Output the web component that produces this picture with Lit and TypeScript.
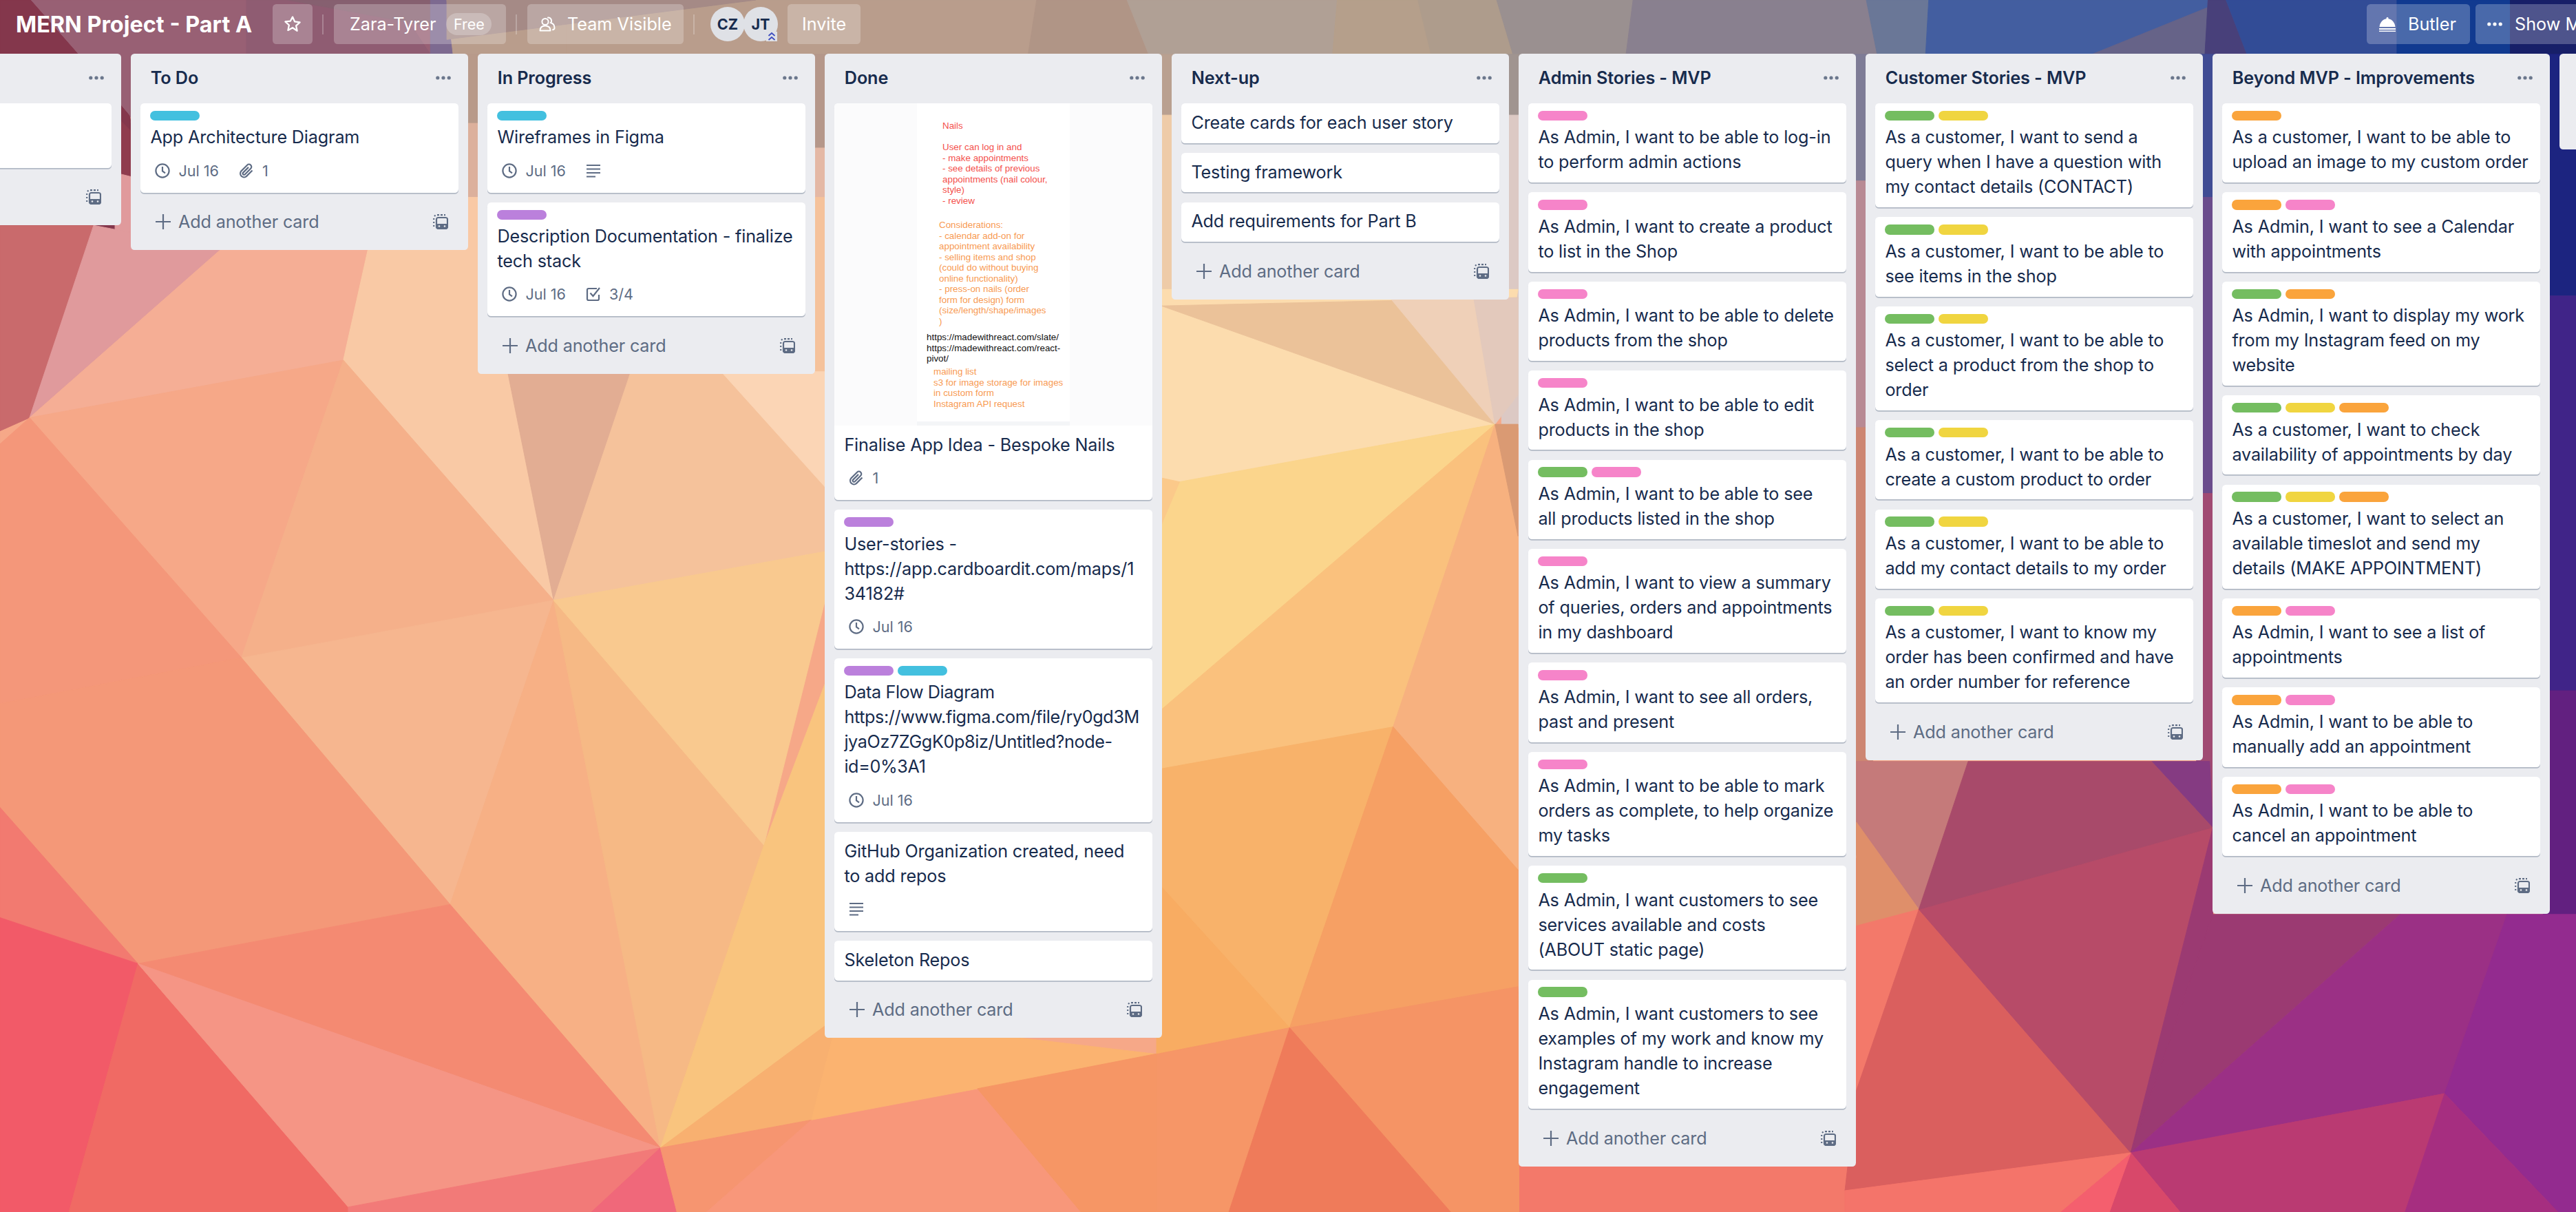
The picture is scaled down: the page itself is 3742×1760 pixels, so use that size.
import { LitElement, html, css, svg } from "lit";
import { customElement } from "lit/decorators.js";

type Badge = { kind: "clock" | "clip" | "desc" | "check"; text?: string };
type Card = { text: string; labels?: string[]; badges?: Badge[]; cover?: boolean; tight?: boolean };
type List = { title: string; cards: Card[] };

const pink = "pink";
const green = "green";
const yellow = "yellow";
const orange = "orange";
const blue = "blue";
const purple = "purple";
const jul16: Badge = { kind: "clock", text: "Jul 16" };

const LISTS: List[] = [
  { title: "To Do", cards: [{ text: "App Architecture Diagram", labels: [blue], badges: [jul16, { kind: "clip", text: "1" }] }] },
  {
    title: "In Progress",
    cards: [
      { text: "Wireframes in Figma", labels: [blue], badges: [jul16, { kind: "desc" }] },
      { text: "Description Documentation - finalize tech stack", labels: [purple], badges: [jul16, { kind: "check", text: "3/4" }] },
    ],
  },
  {
    title: "Done",
    cards: [
      { text: "Finalise App Idea - Bespoke Nails", cover: true, badges: [{ kind: "clip", text: "1" }] },
      { text: "User-stories - https://app.cardboardit.com/maps/134182#", labels: [purple], badges: [jul16] },
      { text: "Data Flow Diagram https://www.figma.com/file/ry0gd3MjyaOz7ZGgK0p8iz/Untitled?node-id=0%3A1", labels: [purple, blue], badges: [jul16], tight: true },
      { text: "GitHub Organization created, need to add repos", badges: [{ kind: "desc" }] },
      { text: "Skeleton Repos" },
    ],
  },
  {
    title: "Next-up",
    cards: [{ text: "Create cards for each user story" }, { text: "Testing framework" }, { text: "Add requirements for Part B" }],
  },
  {
    title: "Admin Stories - MVP",
    cards: [
      { text: "As Admin, I want to be able to log-in to perform admin actions", labels: [pink] },
      { text: "As Admin, I want to create a product to list in the Shop", labels: [pink] },
      { text: "As Admin, I want to be able to delete products from the shop", labels: [pink] },
      { text: "As Admin, I want to be able to edit products in the shop", labels: [pink] },
      { text: "As Admin, I want to be able to see all\u00a0products listed in the shop", labels: [green, pink] },
      { text: "As Admin, I want to view a summary of queries, orders and appointments in my dashboard", labels: [pink] },
      { text: "As Admin, I want to see all orders, past and present", labels: [pink] },
      { text: "As Admin, I want to be able to mark orders as complete, to help organize my tasks", labels: [pink] },
      { text: "As Admin, I want customers to see services available and costs (ABOUT static page)", labels: [green] },
      { text: "As Admin, I want customers to see examples of my work and know my Instagram handle to increase engagement", labels: [green] },
    ],
  },
  {
    title: "Customer Stories - MVP",
    cards: [
      { text: "As a customer, I want to send a query when I have a question with my contact details (CONTACT)", labels: [green, yellow] },
      { text: "As a customer, I want to be able to see items in the shop", labels: [green, yellow] },
      { text: "As a customer, I want to be able to select a product from the shop to order", labels: [green, yellow] },
      { text: "As a customer, I want to be able to create a custom product to order", labels: [green, yellow] },
      { text: "As a customer, I want to be able to add my contact details to my order", labels: [green, yellow] },
      { text: "As a customer, I want to know my order has been confirmed and have an order number for reference", labels: [green, yellow] },
    ],
  },
  {
    title: "Beyond MVP - Improvements",
    cards: [
      { text: "As a customer, I want to be able to upload an image to my custom order", labels: [orange] },
      { text: "As Admin, I want to see a Calendar with appointments", labels: [orange, pink] },
      { text: "As Admin, I want to display my work from my Instagram feed on my website", labels: [green, orange] },
      { text: "As a customer, I want to check availability of appointments by day", labels: [green, yellow, orange] },
      { text: "As a customer, I want to select an available timeslot and send my details (MAKE APPOINTMENT)", labels: [green, yellow, orange] },
      { text: "As Admin, I want to see a list of appointments", labels: [orange, pink] },
      { text: "As Admin, I want to be able to manually add an appointment", labels: [orange, pink] },
      { text: "As Admin, I want to be able to cancel an appointment", labels: [orange, pink] },
    ],
  },
];

// background facets, in the coordinates of the 1568x737 preview
const FACETS: [string, string][] = [
  ["0,0 1568,0 1568,737 0,737", "#f6a888"],
  // header band
  ["0,0 19,0 48,33 79,70 90,160 0,160", "#84374c"],
  ["19,0 175,0 270,0 270,60 100,110 79,70 48,33", "#986074"],
  ["150,0 240,0 262,33 262,60 150,60", "#8f5c72"],
  ["175,0 262,0 262,16", "#866070"],
  ["262,0 272,0 285,33 262,60", "#7d6a90"],
  ["272,0 345,0 345,70 280,70", "#b99d8c"],
  ["345,0 631,0 620,70 345,70", "#b99d8c"],
  ["272,0 460,0 272,24", "#a58a86"],
  ["631,0 686,0 714,70 620,70", "#b09586"],
  ["686,0 814,0 808,70 714,70", "#b0a095"],
  ["814,0 863,0 880,70 808,70", "#b59f8b"],
  ["863,0 911,0 932,70 880,70", "#ae9c8c"],
  ["911,0 994,0 985,70 932,70", "#9a9090"],
  ["994,0 1136,0 1150,70 985,70", "#89808f"],
  ["1136,0 1174,0 1170,70 1150,70", "#6a7797"],
  ["1174,0 1355,0 1350,70 1170,70", "#435ea0"],
  ["1355,0 1350,70 1182,70", "#666388"],
  ["1344,0 1355,0 1382,70 1340,70", "#48407a"],
  ["1355,0 1459,0 1459,70 1382,70", "#324c96"],
  ["1459,0 1528,0 1528,70 1459,70", "#113a90"],
  ["1528,0 1568,0 1568,70 1528,70", "#171f68"],
  // narrow gaps under the header
  ["79,33 90,33 90,90 79,70", "#986074"],
  ["70,70 90,90 90,110 70,105", "#8f3c4e"],
  ["70,105 90,110 90,150 70,150", "#e09a9c"],
  ["280,33 300,33 300,75 280,75", "#b89a8a"],
  ["280,75 300,75 300,140 280,140", "#dcb09c"],
  ["280,140 300,140 300,240 280,240", "#f5c6a8"],
  ["490,33 510,33 510,90 490,90", "#b5978a"],
  ["490,90 510,90 510,140 490,140", "#e4b8a5"],
  ["490,140 510,140 510,340 490,340", "#f9cfae"],
  ["702,33 715,33 715,70 702,70", "#b9a090"],
  ["702,70 715,70 715,186 702,186", "#eecba8"],
  ["914,33 928,33 928,70 914,70", "#a09490"],
  ["914,70 928,70 928,260 914,260", "#dcc9c4"],
  ["1126,33 1140,33 1140,110 1126,110", "#7e7c96"],
  ["1126,110 1140,110 1140,260 1126,260", "#b88a94"],
  ["1126,260 1140,260 1140,520 1126,520", "#cd8672"],
  ["1337,33 1350,33 1350,120 1337,120", "#404c94"],
  ["1337,120 1350,120 1350,300 1337,300", "#6a4c8c"],
  ["1337,300 1350,300 1350,520 1337,520", "#a04a72"],
  ["1548,33 1568,33 1568,180 1548,180", "#1c2480"],
  ["1548,180 1568,180 1568,420 1548,420", "#402488"],
  ["1548,420 1568,420 1568,560 1548,560", "#622080"],
  // lower left
  ["0,137 57,137 18,254 0,262", "#c96a6c"],
  ["57,137 134,152 18,254", "#e09a9c"],
  ["80,137 231,137 231,152 134,152", "#f3ad95"],
  ["134,152 231,152 209,219 18,254", "#f5ae95"],
  ["231,120 300,120 309,226 337,365 209,219", "#f9c9a5"],
  ["309,226 384,226 337,365", "#e2ad93"],
  ["384,226 300,120 520,120 520,334 337,365", "#f5c29b"],
  ["439,226 520,226 520,310 503,297", "#fbd5b5"],
  ["18,254 209,219 147,400", "#f6a888"],
  ["209,219 337,365 147,400", "#f5b08a"],
  ["147,400 337,365 274,550", "#f6b68f"],
  ["337,365 274,550 402,698", "#f7b085"],
  ["337,365 465,514 402,698", "#f6b985"],
  ["337,365 510,334 465,514", "#f9c98f"],
  ["465,514 510,395 510,618 402,698", "#f9c47e"],
  ["0,270 18,254 147,400 0,428", "#f4977a"],
  ["0,428 147,400 274,550 84,586 0,491", "#f49878"],
  ["0,491 84,586 0,558", "#f27a70"],
  ["0,558 84,586 42,737 0,737", "#f25a68"],
  ["84,586 212,734 212,737 42,737", "#f06a64"],
  ["84,586 274,550 402,698", "#f48a72"],
  ["84,586 402,698 212,734", "#f59585"],
  ["212,734 402,698 470,737 212,737", "#f27a78"],
  ["360,737 402,698 412,737", "#f0687a"],
  ["402,698 510,618 494,681", "#f8b070"],
  ["402,698 494,681 430,737 412,737", "#f69570"],
  ["494,681 595,662 658,737 430,737", "#f8977a"],
  ["494,681 510,618 704,641 595,662", "#fbb370"],
  ["595,662 785,625 748,737 658,737", "#f69665"],
  // gap under Next-up
  ["704,176 924,176 910,258 718,293 704,290", "#fcdcae"],
  ["707,186 924,181 910,258", "#ebc299"],
  ["846,181 897,181 910,258", "#efd0b8"],
  ["897,181 924,181 924,240 910,258", "#e3c9bc"],
  ["718,293 910,258 707,434 704,320", "#fbd58c"],
  ["704,290 718,293 704,326", "#fbc98a"],
  ["704,434 910,258 848,442 704,468", "#fac17d"],
  ["910,258 924,326 924,529 848,442", "#f7b17f"],
  ["910,258 924,258 924,326", "#da9a73"],
  ["704,468 848,442 785,625 704,536", "#f8b26a"],
  ["704,536 785,625 704,641", "#f8ac62"],
  ["848,442 924,529 924,600 785,625", "#f6a064"],
  ["785,625 924,600 930,737 883,737", "#f59465"],
  ["704,641 785,625 748,737 704,737", "#f69667"],
  ["785,625 883,737 748,737", "#ef7b5a"],
  // lower right
  ["925,600 1135,520 1135,737 925,737", "#f3796a"],
  ["1130,463 1198,463 1168,553 1130,500", "#c57a7a"],
  ["1130,500 1168,553 1130,563", "#df8f6a"],
  ["1130,563 1168,553 1130,663", "#f3796a"],
  ["1168,553 1297,701 1123,724 1130,663", "#da5f5e"],
  ["1168,553 1347,503 1297,701", "#b74b68"],
  ["1198,463 1310,463 1347,503 1168,553", "#a84a6a"],
  ["1310,463 1345,463 1347,503", "#853b82"],
  ["1347,503 1347,556 1297,701", "#9b3a72"],
  ["1347,556 1461,556 1297,701", "#9b3a72"],
  ["1297,701 1461,556 1526,556 1488,665", "#9b3085"],
  ["1526,556 1568,556 1568,737 1557,737 1488,665", "#932b8f"],
  ["1297,701 1488,665 1464,737 1327,737", "#ba3a72"],
  ["1488,665 1557,737 1464,737", "#a62e80"],
  ["1297,701 1327,737 1284,737", "#d8486a"],
  ["1297,701 1284,737 1254,737", "#f45f6e"],
  ["1297,701 1254,737 1123,737 1123,724", "#f4746a"],
];

const ICONS = {
  clock: svg`<circle cx="12" cy="12" r="9.6" fill="none" stroke="currentColor" stroke-width="2.2"/><path d="M12 6v6.4l4 3" fill="none" stroke="currentColor" stroke-width="2.2"/>`,
  clip: svg`<path d="M20.5 11.5l-8.6 8.6a5.4 5.4 0 0 1-7.6-7.6l8.8-8.8a3.6 3.6 0 0 1 5.1 5.1l-8.4 8.4a1.8 1.8 0 0 1-2.6-2.6l7.8-7.7" fill="none" stroke="currentColor" stroke-width="2.2"/>`,
  desc: svg`<path d="M2 4h20M2 9.5h20M2 15h20M2 20.5h13" fill="none" stroke="currentColor" stroke-width="2"/>`,
  check: svg`<path d="M20 13v6a2 2 0 0 1-2 2H5a2 2 0 0 1-2-2V6a2 2 0 0 1 2-2h12" fill="none" stroke="currentColor" stroke-width="2.2"/><path d="M7.5 10.5l4 4.5L21 3" fill="none" stroke="currentColor" stroke-width="2.2"/>`,
};

const plusIcon = html`<svg class="ico22" viewBox="0 0 22 22"><path d="M11 0v22M0 11h22" stroke="currentColor" stroke-width="2.2" fill="none"/></svg>`;
const templateIcon = html`<svg class="ico22" viewBox="0 0 22 22">
  <path d="M6 1.2h3M11 1.2h3M16 1.2h2M1.2 6v2M1.2 11v2M1.2 16v2M2 3l1.5-1.5" stroke="currentColor" stroke-width="2.2" fill="none"/>
  <rect x="5" y="5" width="16" height="16" rx="2.5" fill="none" stroke="currentColor" stroke-width="2.2"/>
  <path d="M5 14h16v5a2.5 2.5 0 0 1-2.5 2.5h-11A2.5 2.5 0 0 1 5 19z" fill="currentColor"/>
  <circle cx="9" cy="17.5" r="1.3" fill="#ebecf0"/><circle cx="17" cy="17.5" r="1.3" fill="#ebecf0"/>
</svg>`;
const dots = html`<svg class="dots" viewBox="0 0 22 6"><circle cx="2.8" cy="3" r="2.6"/><circle cx="11" cy="3" r="2.6"/><circle cx="19.2" cy="3" r="2.6"/></svg>`;

@customElement("app-root")
export class AppRoot extends LitElement {
  static styles = css`
    :host {
      display: block;
      position: relative;
      width: 3742px;
      height: 1760px;
      overflow: hidden;
      font-family: Inter, "Liberation Sans", sans-serif;
      color: #172b4d;
    }
    .bg {
      position: absolute;
      inset: 0;
      width: 100%;
      height: 100%;
    }
    .page {
      position: relative;
      display: flex;
      flex-direction: column;
      height: 100%;
    }
    .topbar {
      display: flex;
      align-items: center;
      height: 78px;
      padding: 0 0 8px 23px;
      box-sizing: border-box;
      color: #fff;
      font-size: 25.2px;
      flex: none;
    }
    .board-name {
      font-size: 32.4px;
      font-weight: 700;
      width: 373px;
      white-space: nowrap;
    }
    .btn {
      display: flex;
      align-items: center;
      height: 58px;
      box-sizing: border-box;
      border-radius: 5.4px;
      background: rgba(255, 255, 255, 0.24);
      white-space: nowrap;
      flex: none;
    }
    .btn svg { flex: none; }
    .star { width: 58px; justify-content: center; }
    .star svg { width: 26px; height: 26px; }
    .sep {
      width: 2px;
      height: 29px;
      margin: 0 15px 0 14px;
      background: rgba(255, 255, 255, 0.24);
      flex: none;
    }
    .org { width: 250px; padding-left: 23px; }
    .free {
      display: flex;
      align-items: center;
      justify-content: center;
      width: 66px;
      height: 32px;
      margin-left: 15px;
      border-radius: 16px;
      background: rgba(255, 255, 255, 0.24);
      font-size: 21.6px;
    }
    .team { width: 227px; padding-left: 17px; gap: 17px; }
    .team svg { width: 24px; height: 22px; }
    .avatars { display: flex; margin: 0 14px 0 8px; }
    .avatar {
      position: relative;
      width: 50px;
      height: 50px;
      border-radius: 50%;
      background: #dfe1e6;
      color: #172b4d;
      font-size: 21.6px;
      font-weight: 700;
      display: flex;
      align-items: center;
      justify-content: center;
    }
    .avatar + .avatar { margin-left: -2px; }
    .admin {
      position: absolute;
      right: 1px;
      bottom: 0;
      width: 16px;
      height: 14px;
    }
    .invite { width: 106px; justify-content: center; }
    .right { display: flex; gap: 8px; margin-left: auto; margin-right: -64px; }
    .butler { width: 150px; padding-left: 18px; gap: 18px; }
    .butler svg { width: 24px; height: 22px; }
    .menu { width: 210px; padding-left: 17px; gap: 18px; }
    .menu svg { width: 22px; height: 6px; fill: #fff; }

    .board {
      display: flex;
      align-items: flex-start;
      gap: 14px;
      margin-left: -314px;
    }
    .list {
      width: 490px;
      flex: none;
      box-sizing: border-box;
      padding: 0 14px 12.4px;
      border-radius: 5.4px;
      background: #ebecf0;
    }
    .stub { height: 139px; padding: 0; }
    .list-head {
      display: flex;
      align-items: center;
      justify-content: space-between;
      height: 72px;
      padding: 0 11px 2px 14.8px;
      box-sizing: border-box;
      font-size: 25.2px;
      font-weight: 600;
      letter-spacing: -0.1px;
    }
    .dots { width: 22px; height: 6px; fill: #6b778c; }
    .card {
      margin-bottom: 14.25px;
      border-radius: 5.4px;
      background: #fff;
      box-shadow: 0 1.8px 0 rgba(9, 30, 66, 0.25);
      overflow: hidden;
    }
    .details { padding: 9.8px 14.4px 3.6px; }
    .blank { height: 93.6px; }
    .labels { display: flex; gap: 6px; margin: 1px 0 6.2px; }
    .label { width: 72px; height: 14.4px; border-radius: 7.2px; }
    .label.pink { background: #f684c9; }
    .label.green { background: #74bd60; }
    .label.yellow { background: #f0d540; }
    .label.orange { background: #faa43c; }
    .label.blue { background: #43c0df; }
    .label.purple { background: #bb80dc; }
    .title {
      font-size: 25.2px;
      line-height: 36px;
      letter-spacing: -0.16px;
      margin-bottom: 8.2px;
      overflow-wrap: anywhere;
    }
    .title.tight { letter-spacing: -0.38px; }
    .badges {
      display: flex;
      height: 50.4px;
      padding-top: 4px;
      box-sizing: border-box;
      color: #5e6c84;
      font-size: 21.6px;
    }
    .badge { display: flex; align-items: center; height: 36px; margin-right: 22px; }
    .badge svg { width: 24px; height: 24px; margin: 0 6px; }
    .badge span { margin-left: 5px; }

    .cover {
      display: flex;
      justify-content: center;
      height: 468px;
      background: #fbfbfc;
    }
    .shot {
      width: 222px;
      box-sizing: border-box;
      padding-top: 25px;
      background: #fff;
      border-bottom: 6.5px solid #f4f5f7;
      font-family: "Liberation Sans", sans-serif;
      font-size: 13.4px;
      line-height: 15.5px;
    }
    .shot div { white-space: pre-line; }
    .red { padding-left: 37px; color: #f4504c; }
    .amber { padding-left: 32px; margin-top: 20px; color: #f89a52; }
    .black { padding-left: 14px; margin-top: 8px; color: #111; }
    .late { padding-left: 24px; margin-top: 3.5px; color: #f89a52; }

    .add {
      display: flex;
      align-items: center;
      height: 57.2px;
      padding: 0 15px 0 22px;
      gap: 11px;
      color: #5e6c84;
      font-size: 25.2px;
      letter-spacing: -0.16px;
    }
    .add .grow { flex: 1; }
    .ico22 { width: 22px; height: 22px; flex: none; }
  `;

  private renderBadge(b: Badge) {
    return html`<div class="badge">
      <svg viewBox="0 0 24 24">${ICONS[b.kind]}</svg>
      ${b.text ? html`<span>${b.text}</span>` : ""}
    </div>`;
  }

  private renderCover() {
    return html`<div class="cover">
      <div class="shot">
        <div class="red">Nails

User can log in and
- make appointments
- see details of previous
appointments (nail colour,
style)
- review</div>
        <div class="amber">Considerations:
- calendar add-on for
appointment availability
- selling items and shop
(could do without buying
online functionality)
- press-on nails (order
form for design) form
(size/length/shape/images
)</div>
        <div class="black">https://madewithreact.com/slate/
https://madewithreact.com/react-
pivot/</div>
        <div class="late">mailing list
s3 for image storage for images
in custom form
Instagram API request</div>
      </div>
    </div>`;
  }

  private renderCard(c: Card) {
    return html`<div class="card">
      ${c.cover ? this.renderCover() : ""}
      <div class="details">
        ${c.labels
          ? html`<div class="labels">${c.labels.map((l) => html`<div class="label ${l}"></div>`)}</div>`
          : ""}
        <div class="title ${c.tight ? "tight" : ""}">${c.text}</div>
        ${c.badges ? html`<div class="badges">${c.badges.map((b) => this.renderBadge(b))}</div>` : ""}
      </div>
    </div>`;
  }

  private renderList(l: List) {
    return html`<div class="list">
      <div class="list-head"><span>${l.title}</span>${dots}</div>
      ${l.cards.map((c) => this.renderCard(c))}
      <div class="add">${plusIcon}<span class="grow">Add another card</span>${templateIcon}</div>
    </div>`;
  }

  render() {
    return html`
      <svg class="bg" viewBox="0 0 1568 737" preserveAspectRatio="none">
        ${FACETS.map(([p, f]) => svg`<polygon points=${p} fill=${f} stroke=${f} stroke-width="0.4"/>`)}
      </svg>
      <div class="page">
        <div class="topbar">
          <div class="board-name">MERN Project - Part A</div>
          <div class="btn star">
            <svg viewBox="0 0 24 24"><path d="M12 2.4l2.9 6.3 6.9.8-5.1 4.7 1.4 6.8L12 16.8l-6.100 3.400 1.400-6.800-5.100-4.700 6.900-.8z" fill="none" stroke="#fff" stroke-width="2.100" stroke-linejoin="round"/></svg>
          </div>
          <div class="sep"></div>
          <div class="btn org">Zara-Tyrer<span class="free">Free</span></div>
          <div class="sep"></div>
          <div class="btn team">
            <svg viewBox="0 0 24 22"><circle cx="9" cy="7.500" r="4.600" fill="none" stroke="#fff" stroke-width="2"/><path d="M1.500 20.500c0-4.500 3-7 7.500-7s7.500 2.500 7.500 7z" fill="none" stroke="#fff" stroke-width="2" stroke-linejoin="round"/><path d="M13 1.500a4.600 4.600 0 0 1 4 7.500c3.500 1 5.500 3.500 5.500 7.500 0 1.500-1 2.500-2.500 2.800" fill="none" stroke="#fff" stroke-width="2" stroke-linecap="round"/></svg>
            Team Visible
          </div>
          <div class="sep"></div>
          <div class="avatars">
            <div class="avatar">CZ</div>
            <div class="avatar">JT
              <svg class="admin" viewBox="0 0 16 14"><rect width="16" height="14" fill="#dfe1e6"/><path d="M3.500 6L8 2l4.500 4M3.500 12L8 8l4.500 4" fill="none" stroke="#3f4dbf" stroke-width="1.800"/></svg>
            </div>
          </div>
          <div class="btn invite">Invite</div>
          <div class="right">
            <div class="btn butler">
              <svg viewBox="0 0 24 22"><path d="M12 1a1.500 1.500 0 0 1 1.400 2.200C19 4 23 9 23.500 15H.5C1 9 5 4 10.600 3.200A1.500 1.500 0 0 1 12 1zM0 17h24v2H0zM0 20.500h24V22H0z" fill="#fff"/></svg>
              Butler
            </div>
            <div class="btn menu">
              <svg viewBox="0 0 22 6"><circle cx="2.800" cy="3" r="2.600"/><circle cx="11" cy="3" r="2.600"/><circle cx="19.200" cy="3" r="2.600"/></svg>
              Show Menu
            </div>
          </div>
        </div>
        <div class="board">
          <div class="list">
            <div class="list-head"><span></span>${dots}</div>
            <div class="card"><div class="blank"></div></div>
            <div class="add"><span class="grow"></span>${templateIcon}</div>
          </div>
          ${LISTS.map((l) => this.renderList(l))}
          <div class="list stub"></div>
        </div>
      </div>
    `;
  }
}
